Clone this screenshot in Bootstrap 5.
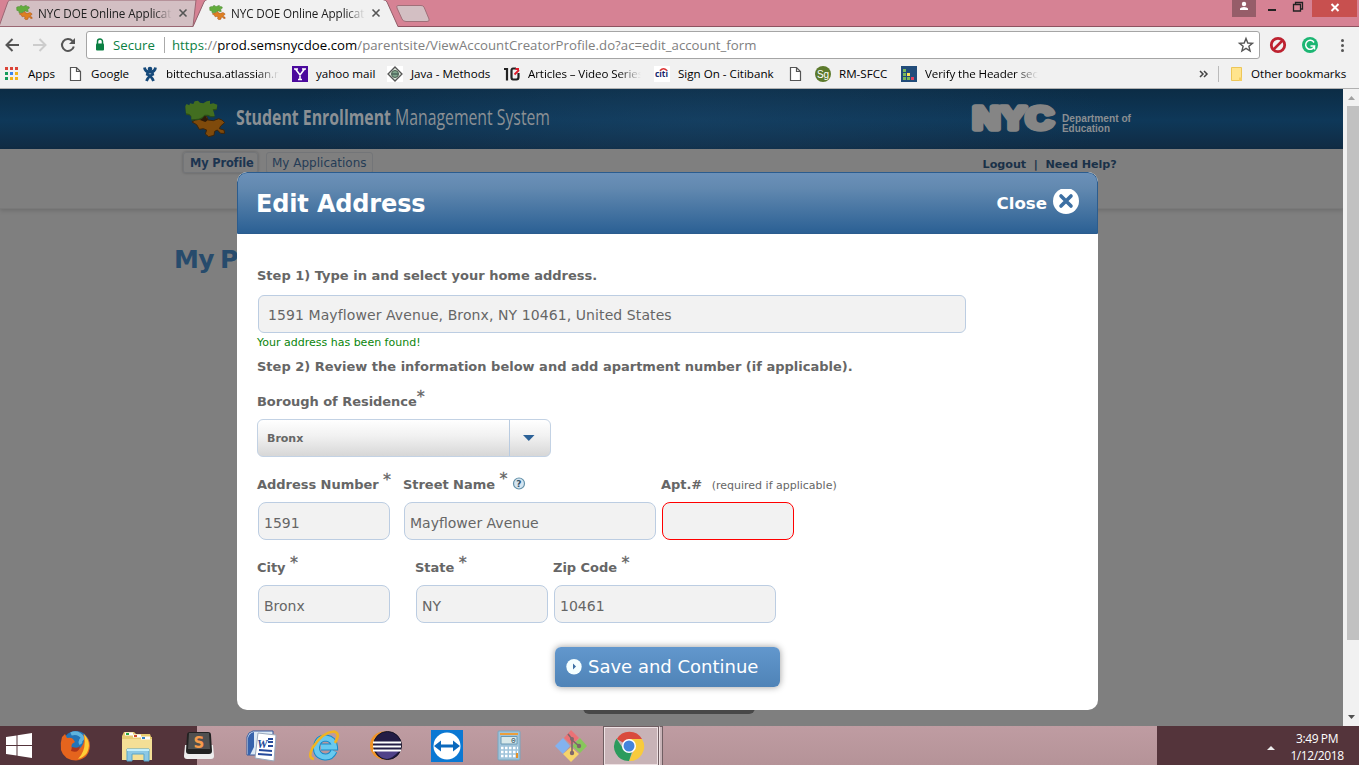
<!DOCTYPE html>
<html lang="en">
<head>
<meta charset="utf-8">
<title>NYC DOE Online Application</title>
<link href="https://cdn.jsdelivr.net/npm/bootstrap@5.3.0/dist/css/bootstrap.min.css" rel="stylesheet">
<style>
body{width:1359px;height:765px;overflow:hidden;font-family:"Open Sans","Noto Sans",sans-serif;font-size:12px;line-height:16px;color:#000;background:#7f7f7f}
svg{display:block;flex:none}
.tabstrip{height:27px;background:#d68294}
.tab-shapes{position:absolute;left:0;top:0}
.tab-item{width:193px;height:26px;padding-left:16px}
.tab-label{width:134px;margin-left:6px;overflow:hidden;white-space:nowrap;font-size:11.7px;letter-spacing:-.1px;color:#222;-webkit-mask-image:linear-gradient(90deg,#000 86%,transparent);mask-image:linear-gradient(90deg,#000 86%,transparent)}
.win-controls{position:absolute;right:0;top:0}
.toolbar{height:33px;background:#f1f1f1;padding-top:4px;padding-left:5px}
.omnibox{width:1174px;height:28px;background:#fff;border:1px solid #a5a5a5;border-radius:3px;font-size:13.2px;white-space:nowrap}
.secure{color:#0b8043;width:50px}
.url{color:#808080;letter-spacing:.03px}
.url b{font-weight:400;color:#000}
.bookmarks{height:29px;background:#f1f1f1;border-bottom:1px solid #b0b0b0;padding:0 0 1px 4px;display:grid;grid-template-columns:63px 75px 150px 95px 117px 150px 133px 28px 86px 296px 18px 1fr;align-items:center;white-space:nowrap;font-size:11.6px}
.bm{display:flex;align-items:center;gap:8px;height:28px}
.fade-label{width:113px;overflow:hidden;letter-spacing:-.1px;-webkit-mask-image:linear-gradient(90deg,#000 80%,transparent);mask-image:linear-gradient(90deg,#000 80%,transparent)}
.viewport{height:637px;background:#7f7f7f;font-family:"DejaVu Sans",Verdana,sans-serif}
.page{width:1343px}
.scroller{width:16px;background:#f1f1f1;color:#505050}
.thumb{width:13px;height:534px;background:#c1c1c1}
.masthead{height:60px;background:radial-gradient(ellipse 420px 70px at 700px 30px,#1b456880,transparent),linear-gradient(#0c2c45,#0e3859 52%,#102b43);padding-left:184px}
.subnav{height:60px;border-bottom:1px solid #797979;box-shadow:0 2px 4px #0002;padding:3px 0 0 183px;font-size:12px}
.nav-tab{height:21px;line-height:21px;border:1px solid #737578;border-radius:3px 3px 2px 2px;color:#253c56;padding:0 5px;white-space:nowrap}
.nav-tab.on{box-shadow:0 0 3px #0004;font-weight:700;font-size:11.4px;letter-spacing:-.15px;width:75px;color:#1c3450;padding-left:6px}
.nav-links{font-weight:700;font-size:11.2px;letter-spacing:-.05px;color:#1a3148;padding:5px 0 0 610px;white-space:pre}
.pagetitle{font-size:25px;line-height:30px;font-weight:700;letter-spacing:-.6px;word-spacing:-2px;color:#274b6c;margin:36px 0 0 174px}
.stub{position:absolute;left:583px;top:610px;width:172px;height:15px;background:#484848;border-radius:0 0 6px 6px}
.dialog{position:absolute;left:237px;top:83px;width:861px;height:538px;background:#fff;border-radius:10px;color:#666;overflow:hidden}
.dialog-head{height:62px;background:linear-gradient(#6b90b8,#6289b0 25%,#2b6094);border:1px solid #2b5c8e;border-radius:10px 10px 0 0;color:#fff;padding:0 17px 0 18px;font-weight:700}
.dialog-head h1{font-size:24px;line-height:30px;font-weight:700;margin:2px 0 0;letter-spacing:-.15px}
.close-text{font-size:16.6px;padding-top:1px}
.dialog-body{padding:32px 20px 0;font-size:13px;font-weight:700;line-height:20px;white-space:nowrap}
.box{height:38px;border:1px solid #bccde2;border-radius:8px;background:#f2f2f2;font-size:14px;font-weight:400;line-height:40px;padding-left:5px;color:#666}
.address-box{width:708px;margin:9px 0 0 1px;padding-left:9px;border-radius:6px;line-height:39px;letter-spacing:.09px}
.found{font-size:11px;font-weight:400;color:#0a850a;line-height:18px;margin-top:1px}
.step-two{margin-top:5px}
.star{font-size:16px;font-weight:400;position:relative;top:-4px;line-height:1;-webkit-text-stroke:.3px #666}
.picker{width:294px;height:38px;border:1px solid #c3d2e4;border-radius:6px;background:linear-gradient(#fff,#f1f1f1 45%,#d7d7d7);font-size:11px;line-height:37px;padding-left:9px}
.picker-arrow{width:41px;border-left:1px solid #b9cbe0}
.fields{display:grid}
.row-street{grid-template-columns:146px 258px 1fr;margin-top:18px}
.row-city{grid-template-columns:158px 138px 1fr;margin-top:18px}
.lbl{height:20px;line-height:20px;margin-bottom:7px;letter-spacing:-.04px}
.borough{margin:15px 0 7px}
.hint{font-size:11px;font-weight:400;margin-left:5px;letter-spacing:0}
.fields .box{margin-left:1px}
.w132{width:132px}.w252{width:252px}.w222{width:222px}
.dialog .bad{border-color:#f00}
.save-btn{width:225px;height:40px;margin:24px 0 0 298px;border:0;border-radius:6px;background:linear-gradient(#6297cd,#4f83b7);box-shadow:0 0 7px #0006;color:#fff;font-size:18px;padding:0 0 1px 11px}
.save-btn span{margin-left:6px}
.taskbar{height:39px;background:#54343b;color:#fff}
.tasks{width:1157px;background:linear-gradient(90deg,#54343b 197px,transparent 197px),linear-gradient(#bf9ca2,#b59398)}
.task-cell{height:39px;display:flex;align-items:center;justify-content:center}
.task-active{width:56px;border:1px solid #705e62;border-bottom:0;background:#c8b3b7;box-shadow:inset 0 0 0 1px #eee1e3}
.clock{font-size:12px;line-height:17px;width:74px;letter-spacing:-.4px;padding-top:2px}
</style>
</head>
<body class="d-flex flex-column">
<svg width="0" height="0" class="position-absolute"><defs>
<path id="piece-top" d="M16 36L20 30L28 34L30 28L40 30L44 22L54 20L60 26L70 28L80 22L90 20L90 30L100 28L112 32L110 44L98 46L102 56L104 66L92 66L84 62L74 62L66 70L56 74L34 76L34 66L28 60L18 58Z"/>
<path id="piece-low" d="M36 84L46 78L66 74L72 66L80 68L84 78L100 80L116 74L126 78L134 86L122 96L118 104L132 108L134 118L122 118L112 108L104 112L102 124L86 128L76 120L80 108L70 104L58 106L50 92Z"/>
<g id="puzzle" transform="translate(-1.500 -2.200) scale(.132)"><use href="#piece-low" fill="#de7f22" stroke="#a9551c" stroke-width="4"/><use href="#piece-top" fill="#63ad3d" stroke="#4c8a34" stroke-width="4"/></g>
<path id="sheet" d="M3.500 1.500H9.500L13.500 5.500V14.500H3.500ZM9.500 1.500V5.500H13.500" fill="#fff" stroke="#555" stroke-width="1.200"/>
</defs></svg>

<header class="tabstrip position-relative flex-shrink-0">
  <svg class="tab-shapes" width="1359" height="27"><path d="M0 26.500H1359" stroke="#8d5260"/><path d="M-1 26.500L8 1.500Q9 0 11 0H196L193 26.500Z" fill="#d3bfc3" stroke="#9a6773"/><path d="M193 27L204 2Q205 0 207 0H383Q386 0 387 2L398 27Z" fill="#f1f1f1"/><path d="M193 26.500L204 2Q205 0 207 -.5M383 -.5Q386 0 387 2L398 26.500" fill="none" stroke="#91606b"/><path d="M398 5.500H421Q423 5.500 424 7L429 19Q430 21.500 427 21.500H406Q403 21.500 402 19L397 8Q396 5.500 398 5.500Z" fill="#d3bfc3" stroke="#a06f79"/></svg>
  <div class="d-flex position-relative">
    <div class="tab-item d-flex align-items-center"><svg width="17" height="16" style="margin-right:-1px"><use href="#puzzle"/></svg><span class="tab-label">NYC DOE Online Application</span><svg width="12" height="10" class="ms-1"><path d="M3.500 1.500L10.500 8.500M10.500 1.500L3.500 8.500" stroke="#555" stroke-width="1.600"/></svg></div>
    <div class="tab-item d-flex align-items-center"><svg width="17" height="16" style="margin-right:-1px"><use href="#puzzle"/></svg><span class="tab-label">NYC DOE Online Application</span><svg width="12" height="10" class="ms-1"><path d="M3.500 1.500L10.500 8.500M10.500 1.500L3.500 8.500" stroke="#555" stroke-width="1.600"/></svg></div>
  </div>
  <svg class="win-controls" width="127" height="17"><path fill="#965d69" d="M0 0H24V17H0Z"/><circle cx="12" cy="4" r="2.200" fill="#fff"/><path d="M8 10V8.500Q9 7 12 7T16 8.500V10Z" fill="#fff"/><path fill="#222" d="M36 9H44V11H36Z"/><path d="M61.500 4.500H68.500V11H61.500ZM63.500 4V2.500H70.500V9H69" fill="none" stroke="#222" stroke-width="1.300"/><path fill="#c8504f" d="M80 0H125V17H80Z"/><path d="M99.500 4L106.500 11M106.500 4L99.500 11" stroke="#fff" stroke-width="2"/></svg>
</header>

<div class="toolbar d-flex flex-shrink-0">
  <svg width="81" height="28"><g fill="none" stroke-width="2"><path d="M14 14H2M7.500 8L1.500 14L7.500 20" stroke="#555"/><path d="M28 14H40M34.500 8L40.500 14L34.500 20" stroke="#ccc"/><path d="M67.500 10A6 6 0 1 0 68.800 15.500" stroke="#555"/></g><path fill="#555" d="M70 7V13H64Z"/></svg>
  <div class="omnibox d-flex align-items-center">
    <svg width="26" height="26"><path d="M10.500 12V9.500A2.500 2.500 0 0 1 15.500 9.500V12" fill="none" stroke="#0b8043" stroke-width="1.500"/><rect x="9" y="11.500" width="8" height="7" rx="1" fill="#0b8043"/></svg>
    <span class="secure">Secure</span><svg width="9" height="18"><path d="M1.500 1V17" stroke="#aaa"/></svg>
    <span class="url"><span style="color:#0b8043">https</span>://<b>prod.semsnycdoe.com</b>/parentsite/ViewAccountCreatorProfile.do?ac=edit_account_form</span>
    <svg class="ms-auto me-1" width="18" height="18"><path d="M9 2.500L10.800 7L15.500 7.300L11.900 10.300L13.100 15L9 12.400L4.900 15L6.100 10.300L2.500 7.300L7.200 7Z" fill="none" stroke="#555" stroke-width="1.400"/></svg>
  </div>
  <svg width="98" height="28"><circle cx="18" cy="14" r="6.700" fill="none" stroke="#bd2230" stroke-width="2.800"/><path d="M22.500 9.500L13.500 18.500" stroke="#bd2230" stroke-width="2.500"/><circle cx="50" cy="14" r="8" fill="#1cb673"/><path d="M54 11.500A4.500 4.500 0 1 0 54.500 15H50.500M54.500 15V18.500" fill="none" stroke="#fff" stroke-width="1.500"/><g fill="#555"><circle cx="82.500" cy="9.500" r="1.500"/><circle cx="82.500" cy="14.500" r="1.500"/><circle cx="82.500" cy="19.500" r="1.500"/></g></svg>
</div>

<nav class="bookmarks flex-shrink-0">
  <div class="bm"><svg width="16" height="16"><g fill="#db4437"><path d="M1 1H4V4H1ZM6 1H9V4H6ZM11 1H14V4H11Z"/></g><path fill="#159b5b" d="M1 6H4V9H1ZM1 11H4V14H1Z"/><path fill="#3a85ef" d="M6 6H9V9H6Z"/><path fill="#f3b41b" d="M11 6H14V9H11ZM6 11H9V14H6ZM11 11H14V14H11Z"/></svg><span>Apps</span></div>
  <div class="bm"><svg width="16" height="16"><use href="#sheet"/></svg><span>Google</span></div>
  <div class="bm"><svg width="16" height="16"><circle cx="8" cy="3" r="2.300" fill="#15497a"/><path d="M2.500 1.500Q3 6 8 6T13.500 1.500M4 8Q9 9 11.500 15M12 8Q7 9 4.500 15" fill="none" stroke="#15497a" stroke-width="2.800"/></svg><span class="fade-label">bittechusa.atlassian.net</span></div>
  <div class="bm"><svg width="16" height="16"><path fill="#4b0a9d" d="M0 0H16V16H0Z"/><path d="M3.500 3L8 9L12.500 3M8 8.500V13.500M2 3H6M10 3H14M6 13.500H10" fill="none" stroke="#fff" stroke-width="1.600"/></svg><span>yahoo mail</span></div>
  <div class="bm"><svg width="16" height="16"><path fill="#fff" d="M0 0H16V16H0Z"/><path d="M8 1L15 8L8 15L1 8Z" fill="#dde6dc" stroke="#555" stroke-width="1.300"/><circle cx="8" cy="8" r="3.500" fill="#80a58c" stroke="#4b5d50"/><path d="M5 8H11" stroke="#344"/></svg><span>Java - Methods</span></div>
  <div class="bm"><svg width="16" height="16"><path d="M0 3H3V14.500" fill="none" stroke="#222" stroke-width="2.200"/><path d="M12 2.500H9Q7.500 2.500 7.500 5V11Q7.500 13.500 9 13.500H12.500Q14.500 13.500 14.500 11V7" fill="none" stroke="#222" stroke-width="2.200"/><path d="M10.500 8.500L15 4M11.500 3H15" fill="none" stroke="#e21b2b" stroke-width="1.800"/></svg><span class="fade-label">Articles – Video Series</span></div>
  <div class="bm"><svg width="16" height="16"><path fill="#fff" d="M0 0H16V16H0Z"/><text x="1" y="11" font-family="Open Sans" font-weight="700" font-size="9" textLength="13" lengthAdjust="spacingAndGlyphs" fill="#15246b">citi</text><path d="M6 4.500Q9.500 1 13 4.500" fill="none" stroke="#dd3030" stroke-width="1.300"/></svg><span>Sign On - Citibank</span></div>
  <div class="bm"><svg width="16" height="16"><use href="#sheet"/></svg></div>
  <div class="bm"><svg width="16" height="16"><circle cx="8" cy="8" r="8" fill="#5c7a2c"/><text x="2" y="11.500" font-family="Liberation Sans" font-size="10" fill="#fff" textLength="12">Sg</text></svg><span>RM-SFCC</span></div>
  <div class="bm"><svg width="16" height="16"><path fill="#214c7a" d="M0 0H16V16H0Z"/><path fill="#79b858" d="M2 3H5V6H2ZM2 7H5V10H2ZM2 11H5V14H2ZM6 11H9V14H6Z"/><path fill="#ffe457" d="M6 7H9V10H6Z"/><path fill="#e23f5c" d="M10 11H13V14H10Z"/></svg><span class="fade-label">Verify the Header section</span></div>
  <svg width="16" height="16"><path d="M3 5L6 8L3 11M7 5L10 8L7 11" fill="none" stroke="#444" stroke-width="1.500"/></svg>
  <div class="bm"><svg width="28" height="16"><path d="M3.500 0V16" stroke="#bbb"/><path d="M16.500 1.500H26.500V14.500H16.500Z" fill="#ffe48d" stroke="#edc658"/><path d="M24 11.500H27V15H24Z" fill="#f5cf62"/></svg><span>Other bookmarks</span></div>
</nav>

<main class="viewport d-flex flex-shrink-0 position-relative">
  <div class="page">
    <div class="masthead">
      <svg width="960" height="60">
        <g transform="translate(-4 5) scale(.3333)"><use href="#piece-low" fill="#7f4a0b" stroke="#3e2408" stroke-width="3"/><path fill="#2e1b08" d="M60 78L74 64L84 78L76 84Z"/><use href="#piece-top" fill="#2c4d17" y="4"/><use href="#piece-top" fill="#426e20"/></g>
        <g fill="#8b9094" font-family="Open Sans"><text x="52" y="36" font-size="21.500" font-weight="700" textLength="155" lengthAdjust="spacingAndGlyphs">Student Enrollment</text><text x="211" y="36" font-size="21.500" textLength="155" lengthAdjust="spacingAndGlyphs">Management System</text></g>
        <text x="788.500" y="40" font-family="Liberation Sans" font-size="32" font-weight="700" textLength="81" lengthAdjust="spacingAndGlyphs" fill="#858585" stroke="#858585" stroke-width="5.500" stroke-linejoin="round">NYC</text>
        <g fill="#8a8e91" font-family="Liberation Sans" font-size="10" font-weight="700"><text x="878" y="33" textLength="69" lengthAdjust="spacingAndGlyphs">Department of</text><text x="878" y="43" textLength="48" lengthAdjust="spacingAndGlyphs">Education</text></g>
      </svg>
    </div>
    <div class="subnav d-flex">
      <div class="nav-tab on">My Profile</div><div class="nav-tab ms-2">My Applications</div>
      <div class="nav-links">Logout  |  Need Help?</div>
    </div>
    <h2 class="pagetitle">My Profile</h2>
  </div>
  <div class="scroller d-flex flex-column align-items-center"><svg width="16" height="17"><path fill="#a0a0a0" d="M5 11L8.500 7L12 11Z"/></svg><div class="thumb ms-1"></div><svg class="mt-auto" width="16" height="17"><path fill="#505050" d="M5 6H12L8.500 10Z"/></svg></div>
  <div class="stub"></div>

  <section class="dialog">
    <div class="dialog-head d-flex align-items-center">
      <h1>Edit Address</h1>
      <span class="close-text ms-auto">Close</span>
      <svg width="33" height="28"><circle cx="19" cy="12" r="13" fill="#fff"/><path d="M14 7L24 17M24 7L14 17" stroke="#3c6fa3" stroke-width="3.600" stroke-linecap="round"/></svg>
    </div>
    <div class="dialog-body">
      <div>Step 1) Type in and select your home address.</div>
      <div class="box address-box">1591 Mayflower Avenue, Bronx, NY 10461, United States</div>
      <div class="found">Your address has been found!</div>
      <div class="step-two">Step 2) Review the information below and add apartment number (if applicable).</div>
      <div class="lbl borough">Borough of Residence<span class="star">*</span></div>
      <div class="picker d-flex"><span>Bronx</span><div class="picker-arrow ms-auto"><svg width="40" height="36"><path fill="#2d6298" d="M13 15H24.500L18.800 21Z"/></svg></div></div>
      <div class="fields row-street">
        <div><div class="lbl">Address Number <span class="star">*</span></div><div class="box w132">1591</div></div>
        <div><div class="lbl d-flex">Street Name&nbsp;<span class="star">*</span><svg class="ms-1" width="15" height="20"><circle cx="8" cy="8.500" r="5.500" fill="#d5e5f1" stroke="#6592a9" stroke-width="1.200"/><text x="5.300" y="12" font-family="DejaVu Sans" font-weight="700" font-size="9" fill="#335368">?</text></svg></div><div class="box w252">Mayflower Avenue</div></div>
        <div><div class="lbl">Apt.# <span class="hint">(required if applicable)</span></div><div class="box w132 bad"></div></div>
      </div>
      <div class="fields row-city">
        <div><div class="lbl">City <span class="star">*</span></div><div class="box w132">Bronx</div></div>
        <div><div class="lbl">State <span class="star">*</span></div><div class="box w132">NY</div></div>
        <div><div class="lbl">Zip Code <span class="star">*</span></div><div class="box w222">10461</div></div>
      </div>
      <button class="btn save-btn d-flex align-items-center"><svg width="16" height="16"><circle cx="8" cy="7.800" r="7.700" fill="#f5ffff"/><path fill="#3c6fa3" d="M7 4.500L10 7.500L7 10.500Z"/></svg><span>Save and Continue</span></button>
    </div>
  </section>
</main>

<footer class="taskbar d-flex flex-shrink-0">
  <div class="tasks d-flex">
    <div class="task-cell" style="width:38px"><svg width="28" height="28"><path fill="#fff" d="M1 5L11.500 3.500V13H1ZM12.500 3.300L27 1V13H12.500ZM1 14H11.500V23.500L1 22ZM12.500 14H27V26L12.500 23.700Z"/></svg></div>
    <div class="task-cell" style="width:74px"><svg width="32" height="32"><circle cx="17" cy="14.500" r="13.500" fill="#2374b6"/><path d="M12 4Q19 1 24 8Q20 11 22 14" fill="none" stroke="#5fb3dd" stroke-width="3.500"/><path d="M3 7L6 4L8 8Q12 7 14 9L16 12L13 14Q11 19 16 20Q21 20 24 14Q26 9 24 4Q31 8 31 16Q30 29 17 30.500Q5 30 2 20Q1 13 3 7Z" fill="#e5641d"/><path d="M25 4Q33 13 28 23Q24 28 19 29Q28 20 25 4Z" fill="#ffcc36"/><path d="M13 17Q19 19 21 16Q20 24 12 21Z" fill="#ad3419"/></svg></div>
    <div class="task-cell" style="width:50px"><svg width="34" height="32"><path fill="#e8cc72" d="M2 6L4 2H14L16 4H30L31 7H32L31 30H2Z"/><path fill="#f4df96" d="M2 9H32V30H2Z"/><path d="M5 4H13M13 6H21M21 8H30" stroke="#fff" stroke-width="3"/><path d="M6 4H9" stroke="#27a644" stroke-width="2"/><path d="M14 6H17" stroke="#d24e2e" stroke-width="2"/><path d="M22 8H25" stroke="#3684c7" stroke-width="2"/><path fill="#8cc8e4" stroke="#56a5cb" d="M7 19H29V31H24V24H12V31H7Z"/><path d="M7 20H29" stroke="#c5effa" stroke-width="2"/></svg></div>
    <div class="task-cell" style="width:73px"><svg width="32" height="30"><path fill="#eee" d="M2 14L1 25Q1 28 4 28H28Q31 28 31 25L30 14Z"/><path fill="#222" d="M4 4Q4 1 7 1H25Q28 1 28 4L29 20Q29 23 26 23H6Q3 23 3 20Z"/><path fill="#505050" d="M6 2H26L27 18H5Z"/><text x="10.500" y="16.500" font-family="DejaVu Sans" font-size="15" font-weight="700" fill="#f69b4b">S</text></svg></div>
    <div class="task-cell" style="width:53px"><svg width="32" height="32"><path fill="#dce9f5" stroke="#34599b" d="M7 1H27V25H1V7Q2 2 7 1Z"/><path fill="#3763ac" d="M2 8Q3 3 8 2V17L4 25H2Z"/><path fill="#fff" stroke="#9aa9bd" d="M12 3L30 5L28 31L9 28Z"/><text x="11" y="18" font-family="Liberation Serif" font-size="12" font-weight="700" font-style="italic" fill="#244a99">W</text><path d="M22 9H27M22 12H27M22 16H27M13 20L26 21M12 24L26 25" stroke="#254a9b" stroke-width="1.800"/></svg></div>
    <div class="task-cell" style="width:73px"><svg width="32" height="32"><path d="M25 21Q22 27.500 16 27Q7 26 7.500 17Q8.500 8 17 8Q25 9 25.500 17H12" fill="none" stroke="#168ac9" stroke-width="7"/><path d="M25 21Q22 27.500 16 27Q7 26 7.500 17Q8.500 8 17 8Q25 9 25.500 17H12" fill="none" stroke="#68c9ef" stroke-width="5"/><path d="M5 29Q-2 28 4 17Q14 2 25 1.500Q32 3 26 13" fill="none" stroke="#f0b323" stroke-width="2.600"/></svg></div>
    <div class="task-cell" style="width:49px"><svg width="34" height="32"><circle cx="15" cy="15.500" r="14" fill="#f09328"/><circle cx="18.500" cy="15.500" r="14" fill="#231c45" stroke="#141224"/><path fill="#514389" d="M7 21H30Q24 28 18 29Q10 28 7 21Z"/><path d="M4 12.500H32M4 16.500H32M4 20.500H32" stroke="#fff" stroke-width="2"/></svg></div>
    <div class="task-cell" style="width:73px"><svg width="32" height="32"><path fill="#0b78d3" d="M0 0H32V32H0Z"/><circle cx="16" cy="16" r="13.500" fill="#fff"/><path fill="#0b69bd" d="M3 16L10 10.500V14.500H22V10.500L29 16L22 21.500V17.500H10V21.500Z"/></svg></div>
    <div class="task-cell" style="width:51px"><svg width="26" height="31"><rect x="2" y="1" width="22" height="29" rx="1" fill="#9fc3da" stroke="#78a6bf"/><path fill="#eb9e3b" d="M4 3H22V5H4Z"/><path fill="#d8e8e9" stroke="#6b99b3" d="M5 6.500H21V14H5Z"/><text x="15" y="13" font-family="Liberation Mono" font-size="8" fill="#245">0</text><path d="M5 18H22M5 22H22M5 26H22" stroke="#fff" stroke-width="2.500" stroke-dasharray="2.500 1.500"/><path fill="#e49025" d="M20 23H22V28H20Z"/></svg></div>
    <div class="task-cell" style="width:73px"><svg width="34" height="34"><path fill="#eb7276" d="M17 1L25 9L17.500 16L10 9Z"/><path fill="#83b2ef" d="M1 17L9 9L16 17L9 25Z"/><path fill="#87c75a" d="M26 9L33 17L26 24L18 17Z"/><path fill="#f6d46b" d="M9 25L17 18L25 25L17 33Z"/><path d="M14 5L18 10V24M18 11L25 17" fill="none" stroke="#7f676b" stroke-width="1.600"/><g fill="#7f676b"><circle cx="18" cy="10" r="2"/><circle cx="18" cy="24" r="2.200"/><circle cx="25" cy="17" r="2.200"/></g></svg></div>
    <div class="d-flex" style="margin-left:-4px">
      <div class="task-cell task-active"><svg width="32" height="32" class="me-1"><path d="M16 16L3.800 9A14.500 14.500 0 0 1 29 9Z" fill="#d94a3d"/><path d="M16 16L29 9A14.500 14.500 0 0 1 16 31L21 20Z" fill="#f8cb3d"/><path d="M3.500 8.500L11 20L19 22L16 31A14.500 14.500 0 0 1 3.500 8.500Z" fill="#2b9b5d"/><path d="M16 9H29L21 20Z" fill="#f8cb3d"/><circle cx="16" cy="16" r="7" fill="#fff"/><circle cx="16" cy="16" r="5.500" fill="#4584dc"/></svg></div>
      <div style="width:4px;border:1px solid #705e62;border-left-color:#eee1e3;border-bottom:0;background:#c8b3b7"></div>
    </div>
  </div>
  <div class="d-flex align-items-center flex-fill justify-content-end pe-1"><svg width="12" height="10"><path fill="#eee" d="M3 9L7 5L11 9Z"/></svg><div class="clock text-center" style="margin-left:4px;margin-right:1px">3:49 PM<br>1/12/2018</div></div>
</footer>
<script src="https://cdn.jsdelivr.net/npm/bootstrap@5.3.0/dist/js/bootstrap.bundle.min.js"></script>
</body>
</html>
